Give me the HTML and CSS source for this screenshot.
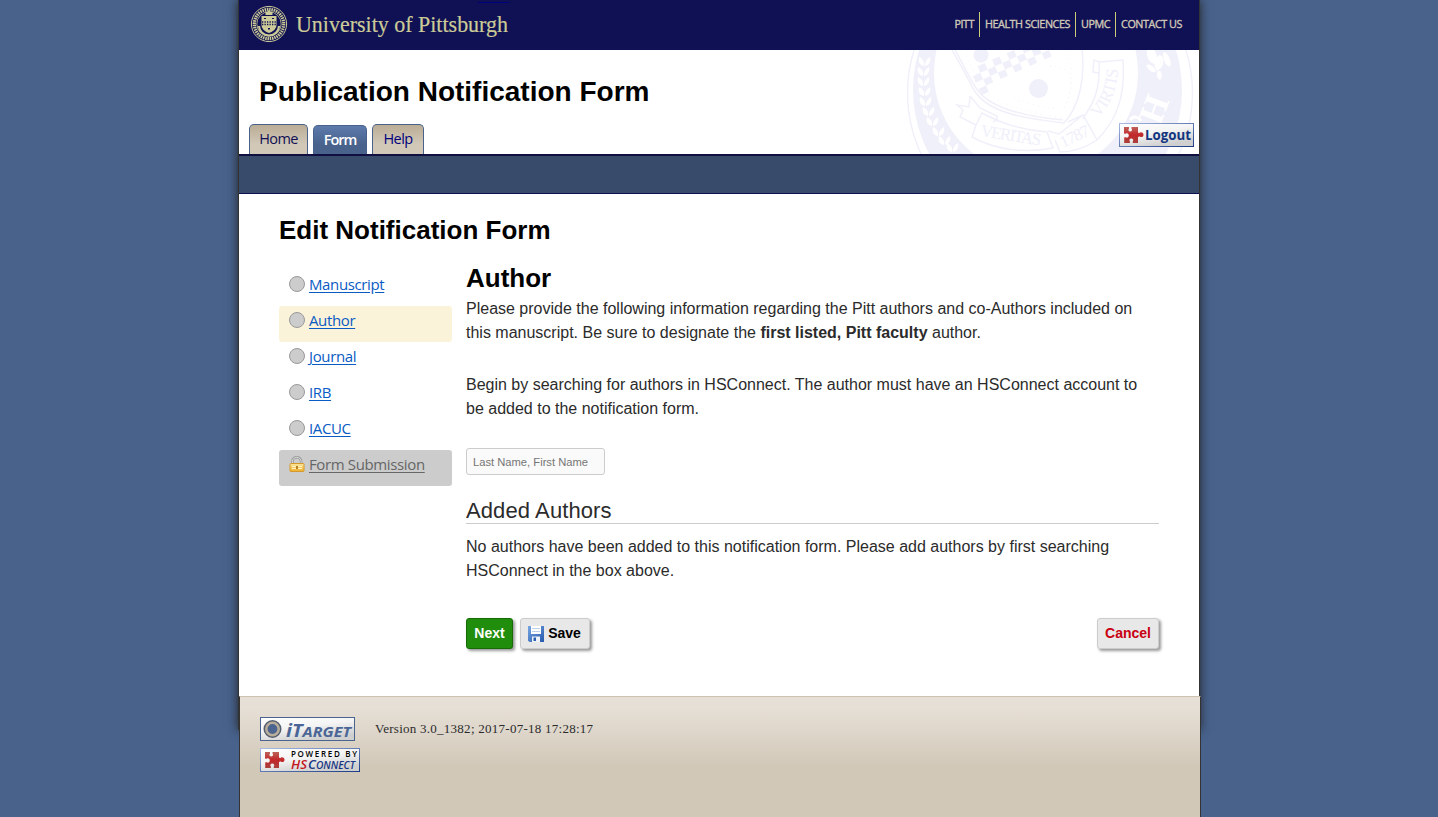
FILE: index.html
```html
<!DOCTYPE html>
<html lang="en">
<head>
<meta charset="utf-8">
<title>Publication Notification Form</title>
<link rel="stylesheet" href="styles.css">
</head>
<body>
<svg class="defs" aria-hidden="true">
  <defs>
    <linearGradient id="badge" x1="0" y1="0" x2=".5" y2="1"><stop offset="0" stop-color="#fff"/><stop offset=".5" stop-color="#f4f4f4"/><stop offset="1" stop-color="#cfcfcf"/></linearGradient>
    <linearGradient id="edge" x1="0" y1="0" x2="1" y2="1"><stop offset="0" stop-color="#a9bbe2"/><stop offset="1" stop-color="#1b3c86"/></linearGradient>
    <linearGradient id="red" x1="0" y1="0" x2="0" y2="1"><stop offset="0" stop-color="#bd6259"/><stop offset=".5" stop-color="#c3272a"/><stop offset="1" stop-color="#a8403c"/></linearGradient>
    <linearGradient id="gold" x1="0" y1="0" x2="0" y2="1"><stop offset="0" stop-color="#fbe7a0"/><stop offset="1" stop-color="#f0ae2c"/></linearGradient>
    <linearGradient id="disk" x1="0" y1="0" x2="1" y2="1"><stop offset="0" stop-color="#78a7e2"/><stop offset="1" stop-color="#2558ad"/></linearGradient>
    <symbol id="puzzle" viewBox="0 0 21 18"><path d="M1 1h5v1.500c-1 1-.6 3 1.200 3S9.500 3.500 8.500 2.500V1H15v5.500c1 .9 1.600.2 2.600-.2 1.800-.4 2.900 1 2.900 2.400 0 1.700-1.500 2.900-3.100 2.200-1-.5-1.700-.6-2.400.3V17H9.800v-1.500c1-1.200.3-3.100-1.500-3.100s-2.400 1.900-1.400 3.100V17H1.200v-5.200c.6-.7 1.200-.5 1.900-.2 1.700.5 2.700-.8 2.700-2.200 0-1.500-1.500-2.500-2.900-1.900-.8.4-1.300.3-1.900-.3z" fill="url(#red)"/></symbol>
  </defs>
</svg>
<div class="page">
  <header class="topbar">
    <svg class="brand" width="265" height="46" viewBox="2 0 265 46">
      <path d="M231 2.500h31" stroke="#00007c"/>
      <circle cx="22" cy="24" r="17.600" fill="#101054" stroke="#cccb98" stroke-width="1"/>
      <circle cx="22" cy="24" r="14.700" fill="none" stroke="#cccb98" stroke-width="3.200" stroke-dasharray="1.500 .8"/>
      <circle cx="22" cy="24" r="12.200" fill="#101054" stroke="#cccb98" stroke-width=".8"/>
      <path d="M12 26c0 5 4 9 10 9.500 6-.5 10-4.500 10-9.500" fill="none" stroke="#cccb98" stroke-width="2.200"/>
      <path d="M18.500 15v-4l1.500 1 2-2 2 2 1.500-1v4zM14.500 16h15v9c0 4-4 7-7.500 8-3.500-1-7.500-4-7.500-8z" fill="#cccb98"/>
      <path d="M15 22h14M15 24.500h14" stroke="#101054" stroke-width="1.300" stroke-dasharray="1.300 1.200"/>
      <path d="M17 18h2v1h-2zM25 18h2v1h-2zM21 28h2v1.500h-2z" fill="#101054"/>
      <text class="wordmark" x="49" y="32" textLength="212" lengthAdjust="spacingAndGlyphs">University of Pittsburgh</text>
    </svg>
    <nav class="sites"><a>PITT</a><a>HEALTH SCIENCES</a><a>UPMC</a><a>CONTACT US</a></nav>
  </header>
  <section class="masthead">
    <svg class="seal" width="292" height="104" viewBox="907 50 292 104">
      <defs><path id="motto" d="M1098 118C1110 105 1118 90 1118 64"/></defs>
      <g fill="none" stroke="#f0f0fa">
        <circle cx="1050" cy="93" r="142.500" stroke-width="1.400"/>
        <path fill="#f0f0fa" stroke="none" fill-rule="evenodd" d="M913 90a134.500 134.500 0 1 0 269 0a134.500 134.500 0 1 0-269 0zM934 73a102 102 0 1 0 204 0a102 102 0 1 0-204 0z"/>
        <g fill="#fff" stroke="none">
          <path id="leaf" d="M924 66c-5-1-6-5-5-9 4 2 6 5 5 9zm1 0c0-5 2-7 5-9 1 5-1 8-5 9z"/>
          <use href="#leaf" y="10" x="-1"/><use href="#leaf" y="20" x="-1"/><use href="#leaf" y="30"/><use href="#leaf" y="40" x="1"/><use href="#leaf" y="50" x="4"/><use href="#leaf" y="60" x="8"/><use href="#leaf" y="70" x="14"/><use href="#leaf" y="79" x="20"/><use href="#leaf" y="86" x="28"/>
          <path d="M1147 50c-1 8 3 13 8 14 4-4 2-10-1-14zM1159 55c-5 6-6 11-2 16 6-3 8-9 5-15zM1163 53c0 7 2 12 7 14 2-6-1-12-5-15zM1146 65c2 5 6 8 10 7-2-6-5-8-10-7zM1158 71c-2 4-1 7 2 9 3-3 2-7 0-9z"/>
        </g>
        <text transform="translate(1160 126) rotate(-69)" class="seal-h">H</text>
        <path d="M1141 121c-3-5-8-5-11-1" stroke="#fff" stroke-width="3"/>
        <path d="M952 50c8 13 15 27 22 40 14 24 55 29 90 33 16-17 21-46 18-73M955 50c9 16 15 29 21 38 13 21 54 29 87 32" stroke-width="1.500"/>
        <path d="M966 56c6 13 15 22 23 38 15 12 41 19 73 24M960 55c8 14 16 32 30 42M1050 66c20 0 26 10 16 40M1066 54c8 16 8 34-2 54M1010 95c10 8 34 12 48 14" stroke-width=".8" stroke-dasharray="1 4"/>
        <g fill="#f0f0fa" stroke="none">
          <circle cx="981" cy="55" r="7.500"/><circle cx="1038.500" cy="88.500" r="9.500"/>
          <path d="M0 0h8v7H0zM16 0h8v7h-8zM32 0h8v7h-8zM48 0h8v7h-8zM64 0h8v7h-8zM8 7h8v7H8zM24 7h8v7h-8zM40 7h8v7h-8zM56 7h8v7h-8zM72 7h8v7h-8zM8-7h8v7H8zM24-7h8v7h-8zM40-7h8v7h-8zM56-7h8v7h-8zM0 14h8v7H0z" transform="translate(973 76) rotate(-24)"/>
        </g>
        <path d="M970 96l-1 11-12-2 6 5-3 7 16 8M970 96l10 12 17 8v4M976 125l6-12c18 10 40 17 65 19l6 16c-26 5-56 3-81-11l4-12M982 113l15 7-4 2M1048 131l11 3 24-19 14 25c-12 8-24 12-37 12l-5-12M1083 115l-15 7M1087 112c9-13 13-27 12-50l24-2c2 33-4 58-26 80M1099 62l-5-2-1 12 6 1M1083 119l4-7" stroke-width="1.500"/>
        <text transform="translate(980 136) rotate(9)" class="seal-t" textLength="61">VERITAS</text>
        <text transform="translate(1063 148) rotate(-26)" class="seal-t" textLength="31">1787</text>
        <text class="seal-t"><textPath href="#motto" textLength="54">VIRTIS</textPath></text>
      </g>
    </svg>
    <h1>Publication Notification Form</h1>
    <div class="tabs-row">
      <nav class="tabs"><a class="tab home">Home</a><a class="tab current">Form</a><a class="tab help">Help</a></nav>
      <svg class="logout" width="75" height="24" viewBox="0 0 75 24"><rect x=".5" y=".5" width="74" height="23" fill="url(#badge)" stroke="url(#edge)"/><use href="#puzzle" x="4" y="3" width="21" height="18"/><text class="logout-text" x="26" y="17" textLength="46" lengthAdjust="spacingAndGlyphs">Logout</text></svg>
    </div>
  </section>
  <div class="subnav"></div>
  <main>
    <h2>Edit Notification Form</h2>
    <div class="columns">
      <ul class="steps">
        <li><i></i><a>Manuscript</a></li>
        <li class="active"><i></i><a>Author</a></li>
        <li><i></i><a>Journal</a></li>
        <li><i></i><a>IRB</a></li>
        <li><i></i><a>IACUC</a></li>
        <li class="locked"><svg width="16" height="16" viewBox="0 0 16 16"><path d="M3.500 8V5.500a4.300 4.300 0 0 1 8.600 0V8" fill="none" stroke="#999" stroke-width="2.600"/><path d="M3.500 8V5.500a4.300 4.300 0 0 1 8.600 0V8" fill="none" stroke="#ddd" stroke-width="1"/><rect x="1" y="7.500" width="14" height="8" rx=".8" fill="url(#gold)" stroke="#d39a2b"/><path d="M3 10.500h10M3 12.500h10" stroke="#fff4bd"/><path d="M7 10h2v3H7z" fill="#b78221"/></svg><a>Form Submission</a></li>
      </ul>
      <section class="form">
        <h2>Author</h2>
        <p>Please provide the following information regarding the Pitt authors and co-Authors included on<br>this manuscript. Be sure to designate the <b>first listed, Pitt faculty</b> author.</p>
        <p>Begin by searching for authors in HSConnect. The author must have an HSConnect account to<br>be added to the notification form.</p>
        <input type="text" placeholder="Last Name, First Name">
        <h3>Added Authors</h3>
        <p class="empty">No authors have been added to this notification form. Please add authors by first searching<br>HSConnect in the box above.</p>
        <div class="actions">
          <button class="next">Next</button>
          <button class="save"><svg width="16" height="16" viewBox="0 0 16 16"><path d="M0 0h16v16H1.500L0 14.500z" fill="url(#disk)"/><path d="M3 0h10v8H3z" fill="#fff"/><path d="M4 2.500h8M4 5.500h8" stroke="#bcd0ea"/><path d="M4 10.500h8V16H4z" fill="#eef3fa"/><path d="M5.500 11.500h2.500V15H5.500z" fill="#2b5eae"/></svg>Save</button>
          <button class="cancel">Cancel</button>
        </div>
      </section>
    </div>
  </main>
</div>
<footer>
  <div class="badges">
    <svg width="95" height="24" viewBox="0 0 95 24"><rect x=".5" y=".5" width="94" height="23" fill="url(#badge)" stroke="#48648f"/><circle cx="12.500" cy="12" r="7" fill="#4c6490" stroke="#555e70" stroke-width="4"/><circle cx="12.500" cy="12" r="6.200" fill="#4c6490" stroke="#b8ae9a" stroke-width="2.600"/><text class="itarget" x="26" y="20" textLength="65" lengthAdjust="spacingAndGlyphs">iT<tspan class="small-caps">ARGET</tspan></text></svg>
    <svg width="100" height="24" viewBox="0 0 100 24"><rect x=".5" y=".5" width="99" height="23" fill="url(#badge)" stroke="url(#edge)"/><use href="#puzzle" x="4" y="3" width="21" height="18"/><text class="powered" x="31" y="9" textLength="66">POWERED BY</text><text class="hsc hs-red" x="31" y="21" textLength="16" lengthAdjust="spacingAndGlyphs">HS</text><text class="hsc" x="48" y="21" textLength="47" lengthAdjust="spacingAndGlyphs">C<tspan class="hs-small">ONNECT</tspan></text></svg>
  </div>
  <p>Version 3.0_1382; 2017-07-18 17:28:17</p>
</footer>
</body>
</html>
```
FILE: styles.css
```css
* { box-sizing: border-box; }
body { margin: 0; height: 817px; overflow: hidden; background: #48628c; color: #2b2b2b; font-family: "Liberation Sans", Arial, sans-serif; }
.defs { position: absolute; width: 0; height: 0; }
h1, h2, h3, p, ul { margin: 0; padding: 0; }
.page { width: 962px; height: 730px; margin: 0 auto; margin-left: 238px; border: solid #333; border-width: 0 1px; background: #fff; box-shadow: 0 0 10px #222; }
.topbar { display: flex; justify-content: space-between; height: 50px; padding: 0 12px 0 10px; background: #101054; }
.brand { display: block; overflow: visible; }
.wordmark { font: 24px "Liberation Serif", serif; fill: #cccb98; stroke: #cccb98; stroke-width: .2; }
.sites { display: flex; align-items: flex-start; padding-top: 12px; font: 500 10.8px/24px "Open Sans", sans-serif; letter-spacing: -.45px; color: #d0c8b8; -webkit-text-stroke: .35px #d0c8b8; }
.sites a { height: 25px; padding: 0 5px; white-space: nowrap; }
.sites a + a { border-left: 1px solid #cccb78; }
.masthead { position: relative; height: 104px; padding: 23px 5px 0 10px; }
.seal { position: absolute; right: 0; top: 0; }
.seal text { stroke: none; fill: #f0f0fa; font-family: "Liberation Serif", serif; }
.seal .seal-h { fill: #fff; font-size: 35px; font-weight: bold; }
.seal .seal-t { font-size: 17px; }
h1 { position: relative; padding-left: 10px; font-size: 28px; line-height: 38px; color: #000; }
.tabs-row { position: relative; display: flex; justify-content: space-between; margin-top: 12px; }
.tabs { display: flex; align-items: flex-end; gap: 5px; height: 32px; }
.tab { height: 31px; border: 1px solid #48628c; border-bottom: 0; border-radius: 5px 5px 0 0; background: linear-gradient(#bbad96, #d1c8b8 65%); color: #101054; text-align: center; font: 14.5px/27px "Open Sans", sans-serif; letter-spacing: -.6px; }
.home { width: 59px; }
.current { width: 54px; height: 30px; background: linear-gradient(#5c7aac, #48628c 65%); color: #fff; font-weight: 600; letter-spacing: -1px; }
.help { width: 52px; color: #00007c; }
.logout-text { font: 700 14px "Open Sans", sans-serif; fill: #12357f; }
.subnav { position: relative; height: 40px; background: #384b6b; border-top: 2px solid #101040; border-bottom: 1px solid #101054; }
main { height: 502px; padding: 17px 40px 0; }
h2 { font-size: 26px; line-height: 38px; color: #000; }
.columns { display: flex; gap: 14px; margin-top: 15px; }
.steps { width: 173px; padding-top: 6px; list-style: none; }
.steps li { display: flex; align-items: flex-start; height: 36px; padding: 6px 10px; gap: 4px; border-radius: 3px; }
.steps i { width: 16px; height: 16px; border: 1px solid #999; border-radius: 50%; background: #ccc; }
.steps a { color: #0a5bc4; font: 15px/16px "Open Sans", sans-serif; letter-spacing: -.37px; text-decoration: underline; text-underline-offset: 2px; white-space: nowrap; }
.steps .active { background: #fbf3d9; }
.steps .locked { background: #ccc; }
.steps .locked a { color: #666; }
.form { width: 693px; }
.form h2 { line-height: 28px; }
.form p { margin-top: 5px; margin-bottom: 28px; font-size: 16px; line-height: 24px; white-space: nowrap; }
.form p + p { margin: 0 0 27px; }
.form input { display: block; width: 139px; height: 27px; padding: 1px 6px 0; border: 1px solid #ccc; border-radius: 3px; background: #fafafa; font: 11.2px "Liberation Sans", sans-serif; }
.form input::placeholder { color: #757575; }
h3 { margin-top: 22px; height: 27px; border-bottom: 1px solid #ccc; font-size: 22px; font-weight: 400; line-height: 27px; letter-spacing: .1px; }
.form .empty { margin: 11px 0 35px; }
.actions { display: flex; gap: 7px; }
button { display: flex; align-items: center; justify-content: center; gap: 4px; height: 31px; padding: 0 0 1px; border: 1px solid #ccc; border-radius: 3px; background: #e8e8e8; box-shadow: 2px 2px 3px #999; color: #000; font: bold 14px/16px "Liberation Sans", sans-serif; }
.next { width: 47px; background: #218d0c; border-color: #176b07; color: #fff; }
.save { width: 70px; padding-right: 1px; }
.save svg { margin-top: 1px; }
.cancel { width: 62px; margin-left: auto; color: #c90010; }
footer { position: relative; display: flex; gap: 15px; width: 962px; height: 121px; margin: -34px 0 0 239px; padding: 20px; border: 1px solid #333; border-top-color: #cdc2b0; border-bottom: 0; background: linear-gradient(#e6dfd5 0 10%, #d1c8b8 58%); }
.badges { display: flex; flex-direction: column; gap: 7px; width: 100px; }
.badges svg { display: block; }
footer p { font: 13px/16px "Liberation Serif", Georgia, serif; padding-top: 4px; letter-spacing: .26px; white-space: nowrap; }
.itarget { font: italic 700 18px "Open Sans", sans-serif; fill: #4b6696; }
.small-caps { font-size: 14.5px; }
.powered { font: 600 8px "Open Sans", sans-serif; fill: #000; }
.hsc { font: italic 600 13px "Open Sans", sans-serif; fill: #173582; }
.hs-red { fill: #c4161c; }
.hs-small { font-size: 10px; }
```
